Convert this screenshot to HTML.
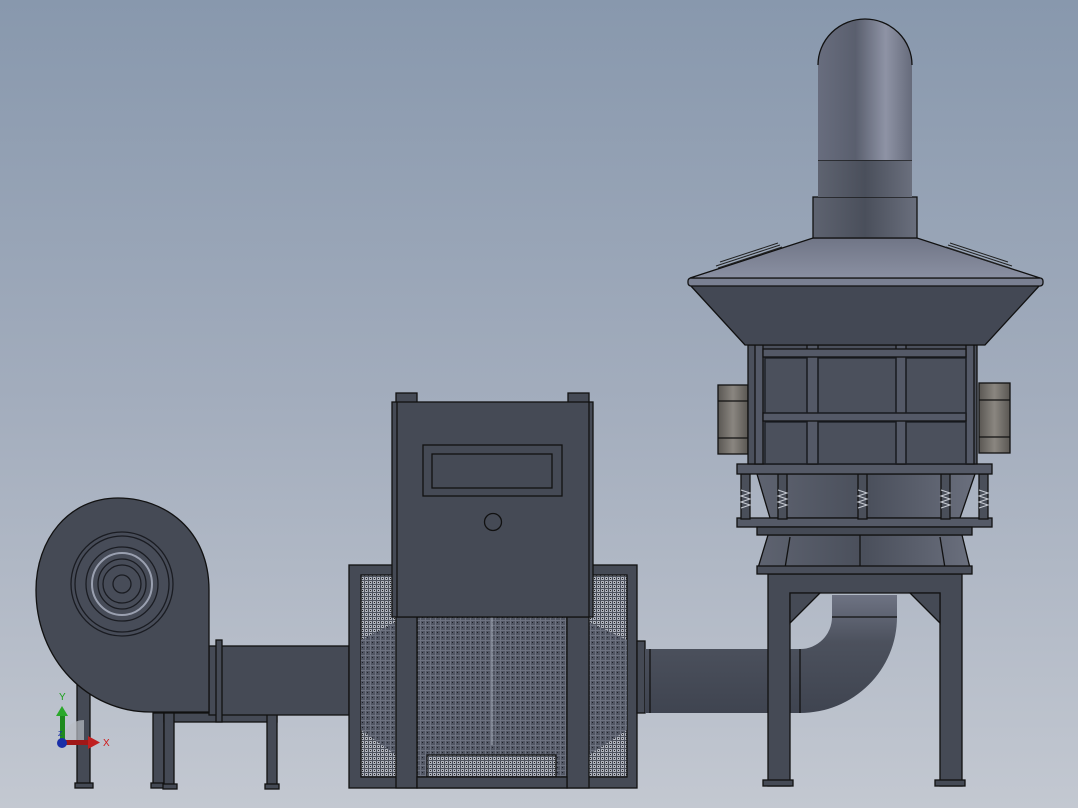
<!DOCTYPE html>
<html><head><meta charset="utf-8"><style>
html,body{margin:0;padding:0;width:1078px;height:808px;overflow:hidden}
svg{display:block}
</style></head><body>
<svg width="1078" height="808" viewBox="0 0 1078 808" xmlns="http://www.w3.org/2000/svg">
<defs>
<linearGradient id="bg" x1="0" y1="0" x2="0" y2="1">
<stop offset="0" stop-color="#8898ad"/><stop offset="0.5" stop-color="#a3adbd"/><stop offset="1" stop-color="#c3c8d1"/></linearGradient>
<linearGradient id="cylV" x1="0" y1="0" x2="1" y2="0">
<stop offset="0" stop-color="#686d7e"/><stop offset="0.4" stop-color="#5a5f6e"/><stop offset="0.72" stop-color="#8e93a5"/><stop offset="1" stop-color="#666b7b"/></linearGradient>
<linearGradient id="cylB" x1="0" y1="0" x2="1" y2="0">
<stop offset="0" stop-color="#5e6370"/><stop offset="0.5" stop-color="#4a4f5b"/><stop offset="1" stop-color="#6a6f7d"/></linearGradient>
<linearGradient id="cylH" x1="0" y1="0" x2="0" y2="1">
<stop offset="0" stop-color="#6e7383"/><stop offset="0.4" stop-color="#4c515d"/><stop offset="1" stop-color="#3f4450"/></linearGradient>
<linearGradient id="cone" x1="0" y1="0" x2="0" y2="1">
<stop offset="0" stop-color="#707586"/><stop offset="1" stop-color="#8a90a2"/></linearGradient>
<linearGradient id="mot" x1="0" y1="0" x2="1" y2="0">
<stop offset="0" stop-color="#5a5753"/><stop offset="0.5" stop-color="#8a8680"/><stop offset="1" stop-color="#5a5753"/></linearGradient>
<pattern id="mesh" width="4" height="4" patternUnits="userSpaceOnUse">
<rect width="4" height="4" fill="#aeb2bc"/><path d="M0 0.5H4M0.5 0V4" stroke="#4d525d" stroke-width="1"/><rect x="2" y="2" width="1" height="1" fill="#222"/></pattern>
<pattern id="mesh2" width="5" height="5" patternUnits="userSpaceOnUse">
<rect width="5" height="5" fill="#515663"/><path d="M0 0.5H5M0.5 0V5" stroke="#6e7381" stroke-width="1"/><rect x="2" y="2" width="1" height="1" fill="#1e2028"/></pattern>
</defs>
<rect width="1078" height="808" fill="url(#bg)"/>
<g stroke="#111" stroke-width="1.3">
<rect x="77" y="678" width="13" height="106" fill="#454a55"/>
<rect x="75" y="783" width="18" height="5" fill="#454a55"/>
<rect x="153" y="713" width="11" height="72" fill="#454a55"/>
<rect x="151" y="783" width="15" height="5" fill="#454a55"/>
<rect x="164" y="713" width="113" height="9" fill="#454a55"/>
<rect x="164" y="713" width="10" height="73" fill="#454a55"/>
<rect x="267" y="713" width="10" height="73" fill="#454a55"/>
<rect x="163" y="784" width="14" height="5" fill="#454a55"/>
<rect x="265" y="784" width="14" height="5" fill="#454a55"/>
<rect x="209" y="646" width="140" height="69" fill="#454a55"/>
<rect x="216" y="640" width="6" height="82" fill="#454a55"/>
<path d="M209,648 L209,590 C209,530 165,498 118,498 C68,498 36,540 36,590 C36,660 88,712 150,712 L209,712 Z" fill="#454a55"/>
<g fill="none" stroke="#1a1c22">
<ellipse cx="122" cy="584" rx="51" ry="52" fill="#474c58"/>
<ellipse cx="122" cy="584" rx="47" ry="48"/>
<ellipse cx="122" cy="584" rx="36" ry="37"/>
<ellipse cx="122" cy="584" rx="30" ry="31" stroke="#9aa0b0" stroke-width="2"/>
<ellipse cx="122" cy="584" rx="24" ry="25"/>
<ellipse cx="122" cy="584" rx="19" ry="19"/>
<ellipse cx="122" cy="584" rx="9" ry="9"/>
</g>
<rect x="349" y="565" width="288" height="223" fill="#454a55"/>
<rect x="361" y="575" width="266" height="202" fill="url(#mesh)"/>
<path d="M361,640 L396,622 L396,755 L361,730 Z" fill="url(#mesh2)" stroke="none"/>
<path d="M627,640 L589,622 L589,755 L627,730 Z" fill="url(#mesh2)" stroke="none"/>
<rect x="417" y="617" width="150" height="160" fill="url(#mesh2)"/>
<line x1="492" y1="617" x2="492" y2="745" stroke="#9aa0ad"/>
<rect x="427" y="755" width="129" height="22" fill="url(#mesh)"/>
<rect x="396" y="617" width="21" height="171" fill="#454a55"/>
<rect x="567" y="617" width="22" height="171" fill="#454a55"/>
<rect x="417" y="777" width="150" height="11" fill="#454a55"/>
<rect x="396" y="393" width="21" height="10" fill="#454a55"/>
<rect x="568" y="393" width="21" height="10" fill="#454a55"/>
<rect x="392" y="402" width="201" height="215" fill="#454a55"/>
<line x1="397" y1="402" x2="397" y2="617"/>
<line x1="589" y1="402" x2="589" y2="617"/>
<rect x="423" y="445" width="139" height="51" fill="none"/>
<rect x="432" y="454" width="120" height="34" fill="none"/>
<circle cx="493" cy="522" r="8.5" fill="none"/>
<rect x="637" y="641" width="8" height="72" fill="#454a55"/>
<path d="M645,649 L800,649 A32,32 0 0 0 832,617 L832,595 L897,595 L897,617 A97,96 0 0 1 800,713 L645,713 Z" fill="url(#cylH)" stroke="none"/>
<line x1="650" y1="649" x2="650" y2="713"/>
<line x1="800" y1="649" x2="800" y2="713"/>
<line x1="832" y1="617" x2="897" y2="617"/>
<path d="M768,574 L962,574 L962,786 L940,786 L940,593 L790,593 L790,786 L768,786 Z" fill="#454a55"/>
<path d="M790,593 L820,593 L790,623 Z M940,593 L910,593 L940,623 Z" fill="#454a55"/>
<rect x="763" y="780" width="30" height="6" fill="#454a55"/>
<rect x="935" y="780" width="30" height="6" fill="#454a55"/>
<path d="M768,535 L962,535 L970,568 L758,568 Z" fill="url(#cylB)"/>
<line x1="790" y1="537" x2="785" y2="568"/><line x1="940" y1="537" x2="945" y2="568"/><line x1="860" y1="535" x2="860" y2="568"/>
<rect x="757" y="566" width="215" height="8" fill="#4a4f5b"/>
<path d="M757,474 L975,474 L960,518 L770,518 Z" fill="url(#cylB)"/>
<rect x="737" y="518" width="255" height="9" fill="#555a67"/>
<rect x="757" y="527" width="215" height="8" fill="#454a55"/>
<g fill="#4a4f5a">
<rect x="741" y="474" width="9" height="45"/><rect x="778" y="474" width="9" height="45"/><rect x="858" y="474" width="9" height="45"/><rect x="941" y="474" width="9" height="45"/><rect x="979" y="474" width="9" height="45"/>
</g>
<g fill="none" stroke="#c8ccd4" stroke-width="1">
<path d="M741,490 l9,3 l-9,3 l9,3 l-9,3 l9,3 l-9,3"/><path d="M778,490 l9,3 l-9,3 l9,3 l-9,3 l9,3 l-9,3"/><path d="M858,490 l9,3 l-9,3 l9,3 l-9,3 l9,3 l-9,3"/><path d="M941,490 l9,3 l-9,3 l9,3 l-9,3 l9,3 l-9,3"/><path d="M979,490 l9,3 l-9,3 l9,3 l-9,3 l9,3 l-9,3"/>
</g>
<rect x="737" y="464" width="255" height="10" fill="#555a67"/>
<rect x="718" y="385" width="30" height="69" fill="url(#mot)"/>
<line x1="718" y1="401" x2="748" y2="401"/><line x1="718" y1="438" x2="748" y2="438"/>
<rect x="979" y="383" width="31" height="70" fill="url(#mot)"/>
<line x1="979" y1="400" x2="1010" y2="400"/><line x1="979" y1="437" x2="1010" y2="437"/>
<rect x="748" y="345" width="229" height="119" fill="#4b505c"/>
<g fill="#545967">
<rect x="755" y="345" width="8" height="119"/><rect x="807" y="345" width="11" height="119"/><rect x="896" y="345" width="10" height="119"/><rect x="966" y="345" width="8" height="119"/>
<rect x="763" y="349" width="203" height="8"/><rect x="763" y="413" width="203" height="8"/>
</g>
<g fill="none" stroke="#1a1c22">
<rect x="765" y="358" width="42" height="55"/><rect x="818" y="358" width="78" height="55"/><rect x="906" y="358" width="60" height="55"/>
<rect x="765" y="422" width="42" height="42"/><rect x="818" y="422" width="78" height="42"/><rect x="906" y="422" width="60" height="42"/>
</g>
<path d="M690,285 L1040,285 L985,345 L745,345 Z" fill="#434854"/>
<rect x="688" y="278" width="355" height="8" rx="3" fill="#7a8092"/>
<path d="M813,238 L917,238 L1040,278 L690,278 Z" fill="url(#cone)"/>
<g stroke="#222" stroke-width="1"><path d="M716,266 L780,245 M718,268 L782,247 M720,262 L778,243"/><path d="M1012,266 L948,245 M1010,268 L946,247 M1008,262 L950,243"/></g>
<rect x="813" y="197" width="104" height="41" fill="url(#cylB)"/>
<rect x="818" y="160" width="94" height="37" fill="url(#cylB)" stroke="none"/>
<line x1="818" y1="160" x2="912" y2="160"/>
<path d="M818,160 L818,65 A47,46 0 0 1 912,65 L912,160 Z" fill="url(#cylV)" stroke="none"/>
<path d="M818,65 A47,46 0 0 1 912,65" fill="none"/>
</g>
<g>
<path d="M62,742 A22,22 0 0 1 84,720 L84,742 Z" fill="#b9bdc5" opacity="0.7"/>
<rect x="60" y="714" width="5" height="28" fill="#1e8a1e"/><path d="M56,716 L62,706 L68,716 Z" fill="#2aa82a"/>
<rect x="62" y="740" width="28" height="5" fill="#a01818"/><path d="M88,736 L100,742.5 L88,749 Z" fill="#c02020"/>
<circle cx="62" cy="743" r="5" fill="#1a2fa8"/>
<text x="59" y="700" font-family="Liberation Sans, sans-serif" font-size="10" fill="#1aa01a">Y</text>
<text x="103" y="746" font-family="Liberation Sans, sans-serif" font-size="10" fill="#d01818">X</text>
<text x="58" y="736" font-family="Liberation Sans, sans-serif" font-size="7" fill="#1a2fa8">Z</text>
</g>
</svg>
</body></html>
